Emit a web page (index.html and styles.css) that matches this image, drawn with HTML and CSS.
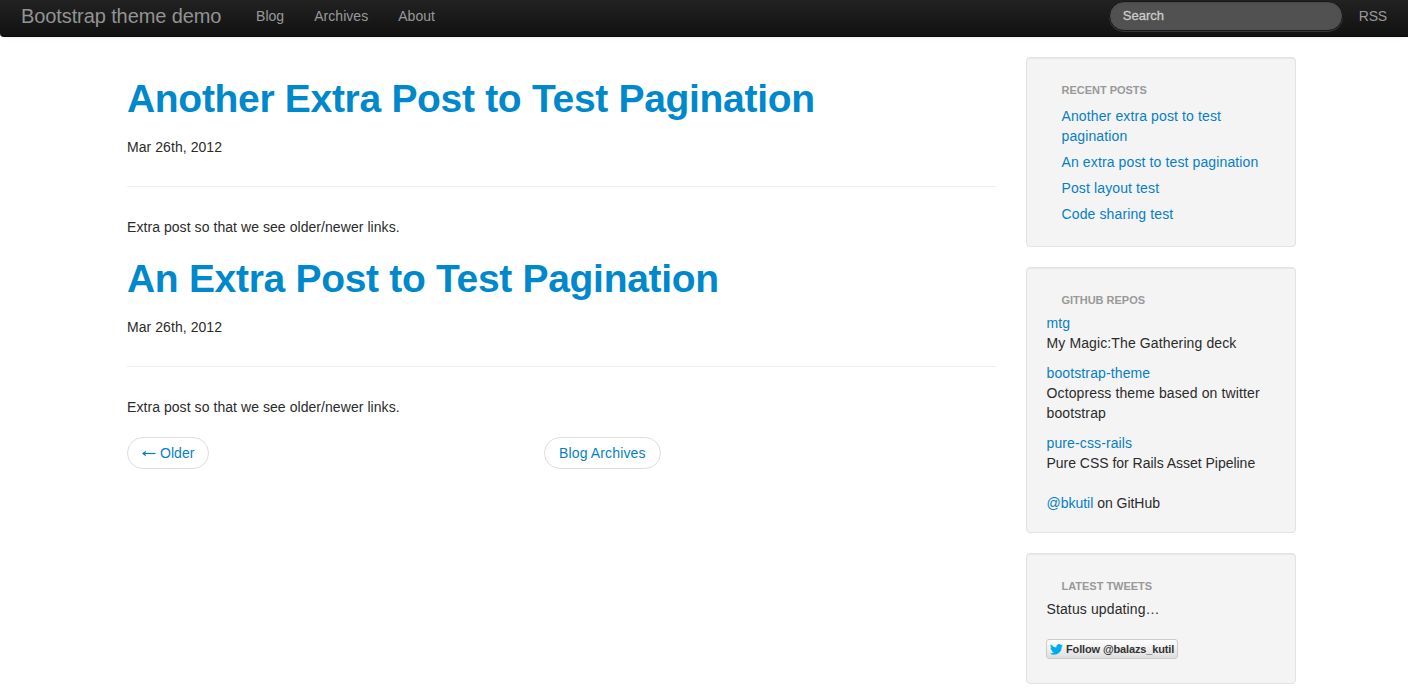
FILE: index.html
```html
<!DOCTYPE html>
<html lang="en">
<head>
<meta charset="utf-8">
<title>Bootstrap theme demo</title>
<link rel="stylesheet" href="styles.css">
</head>
<body>
<header class="navbar">
  <a class="brand" href="#">Bootstrap theme demo</a>
  <nav class="nav">
    <a href="#">Blog</a>
    <a href="#">Archives</a>
    <a href="#">About</a>
  </nav>
  <form class="search"><input class="search-query" type="text" placeholder="Search"></form>
  <a class="rss" href="#">RSS</a>
</header>
<div class="container">
  <main class="content">
    <article class="post">
      <h1><a href="#">Another Extra Post to Test Pagination</a></h1>
      <p class="date">Mar 26th, 2012</p>
      <hr>
      <p class="excerpt">Extra post so that we see older/newer links.</p>
    </article>
    <article class="post">
      <h1><a href="#">An Extra Post to Test Pagination</a></h1>
      <p class="date">Mar 26th, 2012</p>
      <hr>
      <p class="excerpt">Extra post so that we see older/newer links.</p>
    </article>
    <div class="pager">
      <a class="pager-link older" href="#"><svg class="arrow" viewBox="0 0 14 8" width="14" height="8"><path d="M1 4.500h12.500" stroke="currentColor" stroke-width="1.200"/><path d="M0 4.500 4 1.500 3.200 4.500 4 7.500z" fill="currentColor"/></svg><span>Older</span></a>
      <a class="pager-link archives" href="#">Blog Archives</a>
    </div>
  </main>
  <aside class="sidebar">
    <section class="well recent">
      <h3>Recent Posts</h3>
      <ul class="post-list">
        <li><a href="#">Another extra post to test pagination</a></li>
        <li><a href="#">An extra post to test pagination</a></li>
        <li><a href="#">Post layout test</a></li>
        <li><a href="#">Code sharing test</a></li>
      </ul>
    </section>
    <section class="well repos">
      <h3>GitHub Repos</h3>
      <div class="repo"><a href="#">mtg</a><p>My Magic:The Gathering deck</p></div>
      <div class="repo"><a href="#">bootstrap-theme</a><p>Octopress theme based on twitter bootstrap</p></div>
      <div class="repo"><a href="#">pure-css-rails</a><p class="tight">Pure CSS for Rails Asset Pipeline</p></div>
      <p class="profile tight"><a href="#">@bkutil</a> on GitHub</p>
    </section>
    <section class="well tweets">
      <h3>Latest Tweets</h3>
      <p class="status">Status updating…</p>
      <a class="follow" href="#"><svg class="bird" viewBox="0 0 24 20" width="13" height="11"><path fill="#00aced" d="M24 2.400a9.800 9.800 0 0 1-2.800.8A4.900 4.900 0 0 0 23.300.4a9.900 9.900 0 0 1-3.100 1.200 4.900 4.900 0 0 0-8.400 4.500A14 14 0 0 1 1.700.9a4.900 4.900 0 0 0 1.500 6.600A4.900 4.900 0 0 1 1 6.900v.1a4.900 4.900 0 0 0 3.900 4.800 4.900 4.900 0 0 1-2.200.1 4.900 4.900 0 0 0 4.600 3.400A9.900 9.900 0 0 1 0 17.300a14 14 0 0 0 7.500 2.200c9.100 0 14.400-7.700 14-14.600A10 10 0 0 0 24 2.400z"/></svg><span>Follow @balazs_kutil</span></a>
    </section>
  </aside>
</div>
</body>
</html>
```
FILE: styles.css
```css
* { box-sizing: border-box; }
body {
  margin: 0;
  background: #fff;
  color: #2b2b2b;
  font: 14px/20px "Liberation Sans", Arial, sans-serif;
  overflow: hidden;
}
a { color: #067fc6; text-decoration: none; }
p, h1, h3, ul { margin: 0; padding: 0; }

.navbar {
  display: flex;
  align-items: flex-start;
  height: 37px;
  padding: 0 21px;
  border-bottom: 1px solid #080808;
  border-radius: 0 0 0 4px;
  background: linear-gradient(#222, #111);
  box-shadow: 0 1px 4px rgba(0, 0, 0, .065);
}
.navbar a { color: #999; }
.navbar .brand {
  width: 235px;
  padding-top: 6px;
  color: #939393;
  font-size: 20px;
  letter-spacing: -.1px;
  white-space: nowrap;
}
.nav { display: flex; gap: 30px; padding-top: 6px; letter-spacing: .04px; }
.search { margin: 1px 16px 0 auto; }
.search-query {
  display: block;
  width: 234px;
  height: 30px;
  padding: 0 13px 2px;
  border: 1px solid #151515;
  border-radius: 15px;
  background: #515151;
  box-shadow: inset 0 1px 2px rgba(0, 0, 0, .1), 0 1px 0 rgba(255, 255, 255, .15);
  color: #fff;
  font: 13px/18px "Liberation Sans", Arial, sans-serif;
}
.search-query::placeholder { color: #ccc; opacity: 1; -webkit-text-stroke: .3px #ccc; }
.rss { padding-top: 6px; letter-spacing: -.2px; }

.container {
  display: grid;
  grid-template-columns: 869px 270px;
  column-gap: 30px;
  width: 1169px;
  margin: 20px 0 0 127px;
}
.content { padding-top: 12px; letter-spacing: .06px; }
.post { padding: 10px 0; }
.post + .post { padding-top: 12px; }
h1 {
  font-size: 39px;
  line-height: 40px;
  font-weight: bold;
  letter-spacing: -.31px;
}
h1 a { color: #08c; }
.date { margin-top: 18px; }
hr { height: 1px; margin: 29px 0 30px; border: 0; background: #eee; }
.pager { display: flex; padding-top: 10px; }
.pager-link {
  display: flex;
  align-items: center;
  height: 32px;
  padding: 0 14px;
  border: 1px solid #ddd;
  border-radius: 16px;
}
.older { width: 82px; gap: 4px; }
.arrow { flex: none; }
.archives { width: 117px; margin-left: 335px; letter-spacing: .14px; }

.sidebar { letter-spacing: .12px; }
.well {
  margin-bottom: 20px;
  padding: 19px 19px 19px 19.500px;
  border: 1px solid #e3e3e3;
  border-radius: 4px;
  background: #f4f4f4;
  box-shadow: inset 0 1px 1px rgba(0, 0, 0, .05);
}
.recent { height: 190px; }
.repos { height: 266px; }
.tweets { height: 131px; }
h3 {
  padding: 3px 15px;
  color: #999;
  font-size: 11px;
  line-height: 20px;
  letter-spacing: -.02px;
  text-transform: uppercase;
}
.post-list { padding: 3px 15px; list-style: none; }
.post-list li { margin-bottom: 6px; }
.repo { margin-bottom: 10px; }
.tight { letter-spacing: -.02px; }
.profile { margin-top: 20px; }
.follow {
  display: flex;
  align-items: center;
  gap: 3px;
  width: 132px;
  height: 20px;
  margin: 20px 0 0 -.5px;
  padding: 0 3px;
  border: 1px solid #ccc;
  border-radius: 3px;
  background: linear-gradient(#fff, #dedede);
  color: #333;
  font: bold 11px/18px "Liberation Sans", Arial, sans-serif;
  letter-spacing: -.14px;
  white-space: nowrap;
}
.bird { flex: none; }
```
